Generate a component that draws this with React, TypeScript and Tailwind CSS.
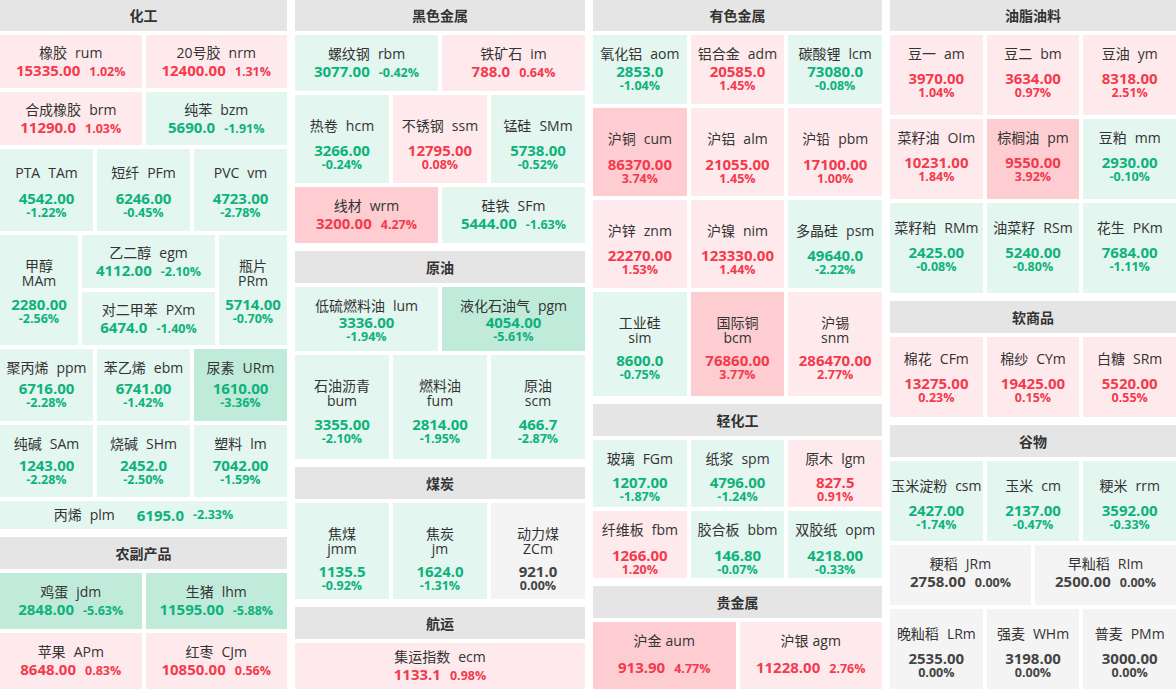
import React from 'react';

type V = 'inline' | 'stack' | 'split' | 'row';
interface T {
  cn: string;
  code: string;
  price: string;
  pct: string;
}

const nameCls = 'text-[14px] text-[#333] whitespace-nowrap';
const priceCls = 'text-[15px] font-bold whitespace-nowrap';
const pctCls = 'text-[12.5px] font-bold whitespace-nowrap';

function colors(pct: string) {
  const n = parseFloat(pct);
  if (n >= 3) return { bg: 'bg-[#fdcdd1]', fg: 'text-[#f43a4d]' };
  if (n > 0) return { bg: 'bg-[#feeaec]', fg: 'text-[#f43a4d]' };
  if (n <= -3) return { bg: 'bg-[#c0ebdb]', fg: 'text-[#0eb27b]' };
  if (n < 0) return { bg: 'bg-[#e3f6ef]', fg: 'text-[#0eb27b]' };
  return { bg: 'bg-[#f4f4f4]', fg: 'text-[#444]' };
}

function Tile({
  t,
  v,
  pt = '',
  g = '',
  cls = 'flex-1',
  sep = 'ml-2',
}: {
  t: T;
  v: V;
  pt?: string;
  g?: string;
  cls?: string;
  sep?: string;
}) {
  const { bg, fg } = colors(t.pct);
  if (v === 'row') {
    return (
      <div className={`${cls} ${bg} flex items-center justify-center`}>
        <span className={`${nameCls} leading-[18px]`}>
          {t.cn}
          <span className="ml-2">{t.code}</span>
        </span>
        <span className={`${priceCls} ${fg} ml-[22px] leading-[18px]`}>{t.price}</span>
        <span className={`${pctCls} ${fg} ml-[9px]`}>{t.pct}</span>
      </div>
    );
  }
  const base = `${cls} ${bg} min-w-0 flex flex-col items-center ${pt ? pt : 'justify-center'}`;
  if (v === 'inline') {
    return (
      <div className={base}>
        <div className={`${nameCls} leading-[18px]`}>
          {t.cn}
          <span className={sep}>{t.code}</span>
        </div>
        <div className={`flex items-baseline gap-[9px] leading-[16px] ${g}`}>
          <span className={`${priceCls} ${fg}`}>{t.price}</span>
          <span className={`${pctCls} ${fg}`}>{t.pct}</span>
        </div>
      </div>
    );
  }
  if (v === 'split') {
    return (
      <div className={base}>
        <div className={`${nameCls} leading-[15px]`}>{t.cn}</div>
        <div className={`${nameCls} leading-[15px]`}>{t.code}</div>
        <div className={`${priceCls} ${fg} leading-[15px] ${g}`}>{t.price}</div>
        <div className={`${pctCls} ${fg} leading-[13px]`}>{t.pct}</div>
      </div>
    );
  }
  return (
    <div className={base}>
      <div className={`${nameCls} leading-[18px]`}>
        {t.cn}
        <span className={sep}>{t.code}</span>
      </div>
      <div className={`${priceCls} ${fg} leading-[15px] ${g}`}>{t.price}</div>
      <div className={`${pctCls} ${fg} leading-[13px]`}>{t.pct}</div>
    </div>
  );
}

function Header({ title, first = false }: { title: string; first?: boolean }) {
  return (
    <div
      className={`${first ? 'h-[31px]' : 'h-[32px] mt-1'} shrink-0 bg-[#e5e5e5] flex items-center justify-center text-[14px] font-bold text-[#333]`}
    >
      {title}
    </div>
  );
}

const d = (cn: string, code: string, price: string, pct: string): T => ({ cn, code, price, pct });

export default function App() {
  return (
    <div className="w-[1176px] h-[689px] overflow-hidden bg-white flex gap-2 font-['Open_Sans','Noto_Sans_CJK_SC',sans-serif]">
      {/* Column 1 */}
      <div className="w-[287px] shrink-0 flex flex-col gap-1">
        <Header title="化工" first />
        <div className="flex gap-1 h-[53px]">
          <Tile v="inline" t={d('橡胶', 'rum', '15335.00', '1.02%')} />
          <Tile v="inline" t={d('20号胶', 'nrm', '12400.00', '1.31%')} />
        </div>
        <div className="flex gap-1 h-[53px]">
          <Tile v="inline" t={d('合成橡胶', 'brm', '11290.0', '1.03%')} />
          <Tile v="inline" t={d('纯苯', 'bzm', '5690.0', '-1.91%')} />
        </div>
        <div className="flex gap-1 h-[82px]">
          <Tile v="stack" pt="pt-[15px]" g="mt-[9px]" t={d('PTA', 'TAm', '4542.00', '-1.22%')} />
          <Tile v="stack" pt="pt-[15px]" g="mt-[9px]" t={d('短纤', 'PFm', '6246.00', '-0.45%')} />
          <Tile v="stack" pt="pt-[15px]" g="mt-[9px]" t={d('PVC', 'vm', '4723.00', '-2.78%')} />
        </div>
        <div className="flex gap-1 h-[110px]">
          <Tile v="split" cls="w-[78px] shrink-0" pt="pt-[23px]" g="mt-[9px]" t={d('甲醇', 'MAm', '2280.00', '-2.56%')} />
          <div className="w-[133px] shrink-0 flex flex-col gap-1">
            <Tile v="inline" t={d('乙二醇', 'egm', '4112.00', '-2.10%')} />
            <Tile v="inline" t={d('对二甲苯', 'PXm', '6474.0', '-1.40%')} />
          </div>
          <Tile v="split" cls="flex-1" pt="pt-[23px]" g="mt-[9px]" t={d('瓶片', 'PRm', '5714.00', '-0.70%')} />
        </div>
        <div className="flex gap-1 h-[72px]">
          <Tile v="stack" pt="pt-[10px]" g="mt-[4px]" t={d('聚丙烯', 'ppm', '6716.00', '-2.28%')} />
          <Tile v="stack" pt="pt-[10px]" g="mt-[4px]" t={d('苯乙烯', 'ebm', '6741.00', '-1.42%')} />
          <Tile v="stack" pt="pt-[10px]" g="mt-[4px]" t={d('尿素', 'URm', '1610.00', '-3.36%')} />
        </div>
        <div className="flex gap-1 h-[72px]">
          <Tile v="stack" pt="pt-[10px]" g="mt-[5px]" t={d('纯碱', 'SAm', '1243.00', '-2.28%')} />
          <Tile v="stack" pt="pt-[10px]" g="mt-[5px]" t={d('烧碱', 'SHm', '2452.0', '-2.50%')} />
          <Tile v="stack" pt="pt-[10px]" g="mt-[5px]" t={d('塑料', 'lm', '7042.00', '-1.59%')} />
        </div>
        <div className="flex gap-1 h-[28px]">
          <Tile v="row" t={d('丙烯', 'plm', '6195.0', '-2.33%')} />
        </div>
        <Header title="农副产品" />
        <div className="flex gap-1 h-[56px]">
          <Tile v="inline" t={d('鸡蛋', 'jdm', '2848.00', '-5.63%')} />
          <Tile v="inline" t={d('生猪', 'lhm', '11595.00', '-5.88%')} />
        </div>
        <div className="flex gap-1 h-[56px]">
          <Tile v="inline" t={d('苹果', 'APm', '8648.00', '0.83%')} />
          <Tile v="inline" t={d('红枣', 'CJm', '10850.00', '0.56%')} />
        </div>
      </div>

      {/* Column 2 */}
      <div className="w-[290px] shrink-0 flex flex-col gap-1">
        <Header title="黑色金属" first />
        <div className="flex gap-1 h-[56px]">
          <Tile v="inline" t={d('螺纹钢', 'rbm', '3077.00', '-0.42%')} />
          <Tile v="inline" t={d('铁矿石', 'im', '788.0', '0.64%')} />
        </div>
        <div className="flex gap-1 h-[88px]">
          <Tile v="stack" pt="pt-[22px]" g="mt-[8px]" t={d('热卷', 'hcm', '3266.00', '-0.24%')} />
          <Tile v="stack" pt="pt-[22px]" g="mt-[8px]" t={d('不锈钢', 'ssm', '12795.00', '0.08%')} />
          <Tile v="stack" pt="pt-[22px]" g="mt-[8px]" t={d('锰硅', 'SMm', '5738.00', '-0.52%')} />
        </div>
        <div className="flex gap-1 h-[56px]">
          <Tile v="inline" t={d('线材', 'wrm', '3200.00', '4.27%')} />
          <Tile v="inline" t={d('硅铁', 'SFm', '5444.00', '-1.63%')} />
        </div>
        <Header title="原油" />
        <div className="flex gap-1 h-[64px]">
          <Tile v="stack" pt="pt-[10px]" t={d('低硫燃料油', 'lum', '3336.00', '-1.94%')} />
          <Tile v="stack" pt="pt-[10px]" t={d('液化石油气', 'pgm', '4054.00', '-5.61%')} />
        </div>
        <div className="flex gap-1 h-[104px]">
          <Tile v="split" pt="pt-[23px]" g="mt-[9px]" t={d('石油沥青', 'bum', '3355.00', '-2.10%')} />
          <Tile v="split" pt="pt-[23px]" g="mt-[9px]" t={d('燃料油', 'fum', '2814.00', '-1.95%')} />
          <Tile v="split" pt="pt-[23px]" g="mt-[9px]" t={d('原油', 'scm', '466.7', '-2.87%')} />
        </div>
        <Header title="煤炭" />
        <div className="flex gap-1 h-[96px]">
          <Tile v="split" pt="pt-[23px]" g="mt-[8px]" t={d('焦煤', 'jmm', '1135.5', '-0.92%')} />
          <Tile v="split" pt="pt-[23px]" g="mt-[8px]" t={d('焦炭', 'jm', '1624.0', '-1.31%')} />
          <Tile v="split" pt="pt-[23px]" g="mt-[8px]" t={d('动力煤', 'ZCm', '921.0', '0.00%')} />
        </div>
        <Header title="航运" />
        <div className="flex gap-1 h-[46px]">
          <Tile v="inline" t={d('集运指数', 'ecm', '1133.1', '0.98%')} />
        </div>
      </div>

      {/* Column 3 */}
      <div className="w-[289px] shrink-0 flex flex-col gap-1">
        <Header title="有色金属" first />
        <div className="flex gap-1 h-[69px]">
          <Tile v="stack" pt="pt-[10px]" g="mt-[1px]" t={d('氧化铝', 'aom', '2853.0', '-1.04%')} />
          <Tile v="stack" pt="pt-[10px]" g="mt-[1px]" t={d('铝合金', 'adm', '20585.0', '1.45%')} />
          <Tile v="stack" pt="pt-[10px]" g="mt-[1px]" t={d('碳酸锂', 'lcm', '73080.0', '-0.08%')} />
        </div>
        <div className="flex gap-1 h-[88px]">
          <Tile v="stack" pt="pt-[22px]" g="mt-[9px]" t={d('沪铜', 'cum', '86370.00', '3.74%')} />
          <Tile v="stack" pt="pt-[22px]" g="mt-[9px]" t={d('沪铝', 'alm', '21055.00', '1.45%')} />
          <Tile v="stack" pt="pt-[22px]" g="mt-[9px]" t={d('沪铅', 'pbm', '17100.00', '1.00%')} />
        </div>
        <div className="flex gap-1 h-[88px]">
          <Tile v="stack" pt="pt-[22px]" g="mt-[8px]" t={d('沪锌', 'znm', '22270.00', '1.53%')} />
          <Tile v="stack" pt="pt-[22px]" g="mt-[8px]" t={d('沪镍', 'nim', '123330.00', '1.44%')} />
          <Tile v="stack" pt="pt-[22px]" g="mt-[8px]" t={d('多晶硅', 'psm', '49640.0', '-2.22%')} />
        </div>
        <div className="flex gap-1 h-[104px]">
          <Tile v="split" pt="pt-[23px]" g="mt-[8px]" t={d('工业硅', 'sim', '8600.0', '-0.75%')} />
          <Tile v="split" pt="pt-[23px]" g="mt-[8px]" t={d('国际铜', 'bcm', '76860.00', '3.77%')} />
          <Tile v="split" pt="pt-[23px]" g="mt-[8px]" t={d('沪锡', 'snm', '286470.00', '2.77%')} />
        </div>
        <Header title="轻化工" />
        <div className="flex gap-1 h-[67px]">
          <Tile v="stack" pt="pt-[10px]" g="mt-[7px]" t={d('玻璃', 'FGm', '1207.00', '-1.87%')} />
          <Tile v="stack" pt="pt-[10px]" g="mt-[7px]" t={d('纸浆', 'spm', '4796.00', '-1.24%')} />
          <Tile v="stack" pt="pt-[10px]" g="mt-[7px]" t={d('原木', 'lgm', '827.5', '0.91%')} />
        </div>
        <div className="flex gap-1 h-[67px]">
          <Tile v="stack" pt="pt-[10px]" g="mt-[9px]" t={d('纤维板', 'fbm', '1266.00', '1.20%')} />
          <Tile v="stack" pt="pt-[10px]" g="mt-[9px]" t={d('胶合板', 'bbm', '146.80', '-0.07%')} />
          <Tile v="stack" pt="pt-[10px]" g="mt-[9px]" t={d('双胶纸', 'opm', '4218.00', '-0.33%')} />
        </div>
        <Header title="贵金属" />
        <div className="flex gap-1 h-[67px]">
          <Tile v="inline" pt="pt-[10px]" g="mt-[9px]" sep="ml-1" t={d('沪金', 'aum', '913.90', '4.77%')} />
          <Tile v="inline" pt="pt-[10px]" g="mt-[9px]" sep="ml-1" t={d('沪银', 'agm', '11228.00', '2.76%')} />
        </div>
      </div>

      {/* Column 4 */}
      <div className="w-[286px] shrink-0 flex flex-col gap-1">
        <Header title="油脂油料" first />
        <div className="flex gap-1 h-[80px]">
          <Tile v="stack" pt="pt-[10px]" g="mt-[8px]" t={d('豆一', 'am', '3970.00', '1.04%')} />
          <Tile v="stack" pt="pt-[10px]" g="mt-[8px]" t={d('豆二', 'bm', '3634.00', '0.97%')} />
          <Tile v="stack" pt="pt-[10px]" g="mt-[8px]" t={d('豆油', 'ym', '8318.00', '2.51%')} />
        </div>
        <div className="flex gap-1 h-[80px]">
          <Tile v="stack" pt="pt-[10px]" g="mt-[8px]" t={d('菜籽油', 'OIm', '10231.00', '1.84%')} />
          <Tile v="stack" pt="pt-[10px]" g="mt-[8px]" t={d('棕榈油', 'pm', '9550.00', '3.92%')} />
          <Tile v="stack" pt="pt-[10px]" g="mt-[8px]" t={d('豆粕', 'mm', '2930.00', '-0.10%')} />
        </div>
        <div className="flex gap-1 h-[90px]">
          <Tile v="stack" pt="pt-[16px]" g="mt-[8px]" t={d('菜籽粕', 'RMm', '2425.00', '-0.08%')} />
          <Tile v="stack" pt="pt-[16px]" g="mt-[8px]" t={d('油菜籽', 'RSm', '5240.00', '-0.80%')} />
          <Tile v="stack" pt="pt-[16px]" g="mt-[8px]" t={d('花生', 'PKm', '7684.00', '-1.11%')} />
        </div>
        <Header title="软商品" />
        <div className="flex gap-1 h-[80px]">
          <Tile v="stack" pt="pt-[13px]" g="mt-[8px]" t={d('棉花', 'CFm', '13275.00', '0.23%')} />
          <Tile v="stack" pt="pt-[13px]" g="mt-[8px]" t={d('棉纱', 'CYm', '19425.00', '0.15%')} />
          <Tile v="stack" pt="pt-[13px]" g="mt-[8px]" t={d('白糖', 'SRm', '5520.00', '0.55%')} />
        </div>
        <Header title="谷物" />
        <div className="flex gap-1 h-[80px]">
          <Tile v="stack" pt="pt-[16px]" g="mt-[8px]" t={d('玉米淀粉', 'csm', '2427.00', '-1.74%')} />
          <Tile v="stack" pt="pt-[16px]" g="mt-[8px]" t={d('玉米', 'cm', '2137.00', '-0.47%')} />
          <Tile v="stack" pt="pt-[16px]" g="mt-[8px]" t={d('粳米', 'rrm', '3592.00', '-0.33%')} />
        </div>
        <div className="flex gap-1 h-[60px]">
          <Tile v="inline" pt="pt-[10px]" t={d('粳稻', 'JRm', '2758.00', '0.00%')} />
          <Tile v="inline" pt="pt-[10px]" t={d('早籼稻', 'RIm', '2500.00', '0.00%')} />
        </div>
        <div className="flex gap-1 h-[80px]">
          <Tile v="stack" pt="pt-[16px]" g="mt-[8px]" t={d('晚籼稻', 'LRm', '2535.00', '0.00%')} />
          <Tile v="stack" pt="pt-[16px]" g="mt-[8px]" t={d('强麦', 'WHm', '3198.00', '0.00%')} />
          <Tile v="stack" pt="pt-[16px]" g="mt-[8px]" t={d('普麦', 'PMm', '3000.00', '0.00%')} />
        </div>
      </div>
    </div>
  );
}
